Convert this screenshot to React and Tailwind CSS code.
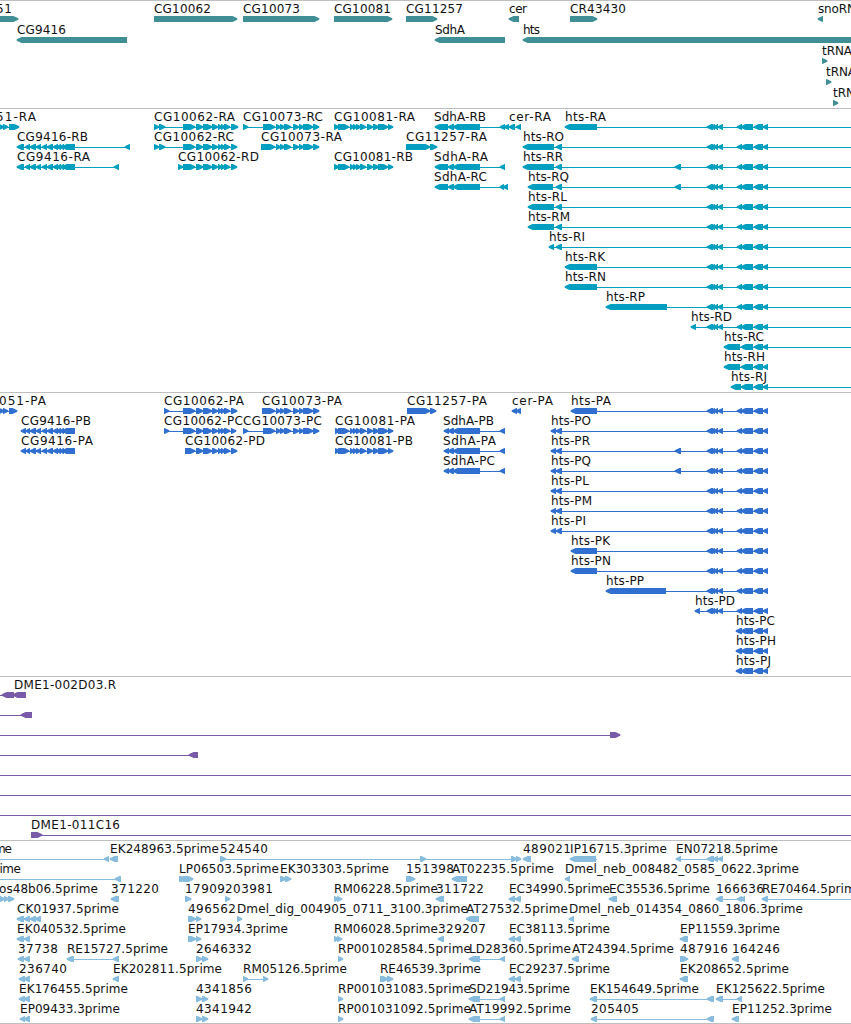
import clsx from "clsx";

// advance widths of the label font, in px
const CHAR_WIDTHS = {
  A: 9, B: 7, C: 8, D: 9, E: 7, G: 9, H: 9, I: 4, J: 4, K: 8, L: 7, M: 10,
  N: 9, O: 9, P: 7, Q: 9, R: 8, S: 6, T: 7, b: 8, c: 6, d: 8, e: 7, g: 8,
  h: 7, i: 3, l: 3, m: 11, n: 7, o: 7, p: 8, r: 5, s: 6, t: 4,
  "-": 7, "_": 6, ".": 4, ":": 4,
};

const labelWidth = (text) =>
  [...text].reduce((sum, ch) => sum + (CHAR_WIDTHS[ch] ?? 8), 0);

// feature = [row, label, label x, strand, blocks, line start, line end]
const genes = [
  [0, "51", -4, 1, [[-20, 18]]],
  [1, "CG9416", 17, -1, [[17, 127]]],
  [0, "CG10062", 154, 1, [[154, 237]]],
  [0, "CG10073", 243, 1, [[243, 319]]],
  [0, "CG10081", 334, 1, [[334, 392]]],
  [0, "CG11257", 406, 1, [[406, 437]]],
  [1, "SdhA", 435, -1, [[435, 505]]],
  [0, "cer", 509, -1, [[509, 519]]],
  [1, "hts", 523, -1, [[523, 870]]],
  [0, "CR43430", 570, 1, [[570, 597]]],
  [0, "snoRNA", 818, -1, [[818, 823]]],
  [2, "tRNA", 822, 1, [[822, 827]]],
  [3, "tRNA", 826, 1, [[826, 831]]],
  [4, "tRNA", 833, 1, [[833, 838]]],
];

const cg9416 = [[30, 36], [36, 41], [42, 47], [47, 53], [53, 58], [57, 61], [60, 64], [62, 75]];
const cg10062 = [[196, 203], [203, 212], [212, 218], [218, 222], [221, 225], [224, 230]];
const cg10073 = [[276, 281], [280, 285], [284, 291], [293, 299], [299, 304], [303, 313], [313, 319]];
const cg10081 = [[338, 349], [350, 354], [353, 357], [356, 361], [360, 366], [367, 373], [373, 379], [378, 388], [388, 393]];
const htsMid = [[707, 713], [711, 715], [714, 718], [718, 723]];
const htsEnd = [[741, 753], [754, 763], [763, 768]];
const htsTail = [...htsMid, [737, 742], ...htsEnd];

const transcripts = [
  [0, "51-RA", -4, 1, [[-2, 4], [3, 8], [9, 19]]],
  [1, "CG9416-RB", 17, -1, [[17, 24], [25, 30], ...cg9416, [125, 130]]],
  [2, "CG9416-RA", 17, -1, [[17, 24], [25, 30], ...cg9416, [114, 119]]],
  [0, "CG10062-RA", 154, 1, [[154, 159], [159, 165], [183, 195], ...cg10062, [231, 238]]],
  [1, "CG10062-RC", 154, 1, [[154, 159], [159, 165], [183, 195], ...cg10062, [231, 237]]],
  [2, "CG10062-RD", 178, 1, [[178, 183], [183, 195], ...cg10062, [231, 237]]],
  [0, "CG10073-RC", 243, 1, [[243, 248], [263, 275], ...cg10073]],
  [1, "CG10073-RA", 261, 1, [[261, 275], ...cg10073]],
  [0, "CG10081-RA", 334, 1, [[334, 339], ...cg10081]],
  [2, "CG10081-RB", 334, 1, [[334, 339], ...cg10081]],
  [1, "CG11257-RA", 406, 1, [[406, 430], [430, 437]]],
  [0, "SdhA-RB", 434, -1, [[435, 448], [448, 454], [453, 480], [500, 505], [504, 509]]],
  [2, "SdhA-RA", 434, -1, [[435, 448], [448, 454], [453, 480], [500, 505]]],
  [3, "SdhA-RC", 434, -1, [[435, 448], [448, 454], [453, 480], [500, 504], [503, 508]]],
  [0, "cer-RA", 509, -1, [[509, 515], [516, 521]]],
  [0, "hts-RA", 565, -1, [[565, 597], ...htsTail], 565, 851],
  [1, "hts-RO", 523, -1, [[523, 554], [556, 562], ...htsTail], 523, 851],
  [2, "hts-RR", 523, -1, [[523, 554], [556, 562], [675, 681], ...htsTail], 523, 851],
  [3, "hts-RQ", 528, -1, [[528, 553], [556, 562], [675, 681], ...htsTail], 528, 851],
  [4, "hts-RL", 528, -1, [[528, 554], [556, 562], ...htsTail], 528, 851],
  [5, "hts-RM", 528, -1, [[528, 554], [556, 562], ...htsTail], 528, 851],
  [6, "hts-RI", 549, -1, [[549, 554], [556, 562], ...htsTail], 549, 851],
  [7, "hts-RK", 565, -1, [[565, 597], ...htsTail], 565, 851],
  [8, "hts-RN", 565, -1, [[565, 597], ...htsTail], 565, 851],
  [9, "hts-RP", 606, -1, [[606, 667], ...htsTail], 606, 851],
  [10, "hts-RD", 691, -1, [[691, 696], ...htsTail], 691, 851],
  [11, "hts-RC", 724, -1, [[724, 740], ...htsEnd], 724, 851],
  [12, "hts-RH", 724, -1, [[724, 740], ...htsEnd]],
  [13, "hts-RJ", 731, -1, [[731, 741], ...htsEnd], 731, 851],
];

const proteins = [
  [0, "051-PA", -1, 1, [[-2, 4], [3, 8], [9, 17]]],
  [1, "CG9416-PB", 21, -1, [[21, 26], [26, 30], ...cg9416]],
  [2, "CG9416-PA", 21, -1, [[21, 26], [26, 30], ...cg9416]],
  [0, "CG10062-PA", 164, 1, [[164, 169], [183, 195], ...cg10062, [231, 237]]],
  [1, "CG10062-PC", 164, 1, [[164, 169], [183, 195], ...cg10062, [231, 236]]],
  [2, "CG10062-PD", 185, 1, [[185, 195], ...cg10062, [231, 237]]],
  [0, "CG10073-PA", 262, 1, [[262, 275], ...cg10073]],
  [1, "CG10073-PC", 243, 1, [[243, 248], [263, 275], ...cg10073]],
  [1, "CG10081-PA", 335, 1, [[335, 340], ...cg10081]],
  [2, "CG10081-PB", 335, 1, [[335, 340], ...cg10081]],
  [0, "CG11257-PA", 407, 1, [[407, 430], [430, 436]]],
  [1, "SdhA-PB", 443, -1, [[444, 449], [448, 454], [453, 480], [500, 505]]],
  [2, "SdhA-PA", 443, -1, [[444, 449], [448, 454], [453, 480], [500, 505]]],
  [3, "SdhA-PC", 443, -1, [[444, 449], [448, 454], [453, 480], [500, 505]]],
  [0, "cer-PA", 512, -1, [[512, 517], [516, 521]]],
  [0, "hts-PA", 571, -1, [[571, 597], ...htsTail]],
  [1, "hts-PO", 551, -1, [[551, 556], [556, 562], ...htsTail]],
  [2, "hts-PR", 551, -1, [[551, 556], [556, 562], [675, 681], ...htsTail]],
  [3, "hts-PQ", 551, -1, [[551, 556], [556, 562], [675, 681], ...htsTail]],
  [4, "hts-PL", 551, -1, [[551, 556], [556, 562], ...htsTail]],
  [5, "hts-PM", 551, -1, [[551, 556], [556, 562], ...htsTail]],
  [6, "hts-PI", 551, -1, [[551, 556], [556, 562], ...htsTail]],
  [7, "hts-PK", 571, -1, [[571, 597], ...htsTail]],
  [8, "hts-PN", 571, -1, [[571, 597], ...htsTail]],
  [9, "hts-PP", 606, -1, [[606, 666], ...htsTail]],
  [10, "hts-PD", 695, -1, [[695, 700], ...htsTail]],
  [11, "hts-PC", 736, -1, [[736, 742], ...htsEnd]],
  [12, "hts-PH", 736, -1, [[736, 742], ...htsEnd]],
  [13, "hts-PJ", 736, -1, [[736, 742], ...htsEnd]],
];

const bacEnds = [
  [0, "DME1-002D03.R", 14, -1, [[2, 14], [13, 26]], 0, 26],
  [1, "", 0, -1, [[21, 32]], 0, 32],
  [2, "", 0, 1, [[610, 620]], 0, 620],
  [3, "", 0, -1, [[189, 198]], 0, 198],
  [4, "", 0, 1, [], 0, 851],
  [5, "", 0, 1, [], 0, 851],
  [6, "", 0, 1, [], 0, 851],
  [7, "DME1-011C16", 31, 1, [[31, 42]], 31, 851],
];

const ests = [
  [0, "me", -6, -1, [[104, 109]], 0, 109],
  [0, "EK248963.5prime", 110, -1, [[110, 118]]],
  [0, "524540", 220, 1, [[220, 226], [420, 426], [511, 517], [516, 521]]],
  [0, "489021", 523, -1, [[523, 531]]],
  [0, "IP16715.3prime", 570, -1, [[570, 596]], 570, 597],
  [0, "EN07218.5prime", 676, -1, [[676, 681], [707, 714], [713, 718], [718, 723]]],
  [1, "rime", -5, -1, [[115, 121]], 0, 121],
  [1, "LP06503.5prime", 179, 1, [[179, 186], [183, 193]]],
  [1, "EK303303.5prime", 280, 1, [[280, 286], [285, 291]]],
  [1, "151398", 406, 1, [[406, 415]]],
  [1, "AT02235.5prime", 452, -1, [[452, 467]]],
  [1, "Dmel_neb_008482_0585_0622.3prime", 565, -1, [[565, 570]]],
  [2, "os48b06.5prime", -1, 1, [[-1, 5], [4, 9], [8, 14]]],
  [2, "371220", 111, -1, [[111, 119]]],
  [2, "17909", 185, 1, [[185, 191]]],
  [2, "203981", 225, 1, [[225, 230]]],
  [2, "RM06228.5prime", 334, 1, [[334, 339], [337, 342]]],
  [2, "311722", 436, -1, [[436, 444]]],
  [2, "EC34990.5prime", 509, -1, [[509, 515], [515, 521]]],
  [2, "EC35536.5prime", 609, -1, [[609, 617]]],
  [2, "166636", 716, -1, [[716, 723], [737, 742], [740, 745]]],
  [2, "RE70464.5prime", 762, -1, [[762, 768]], 762, 851],
  [3, "CK01937.5prime", 17, -1, [[17, 24], [24, 30], [30, 36], [35, 41]]],
  [3, "496562", 188, 1, [[188, 196], [196, 201]]],
  [3, "Dmel_dig_004905_0711_3100.3prime", 237, 1, [[237, 242]]],
  [3, "AT27532.5prime", 466, -1, [[466, 479]]],
  [3, "Dmel_neb_014354_0860_1806.3prime", 569, -1, [[569, 574]]],
  [4, "EK040532.5prime", 17, -1, [[17, 24], [24, 30]]],
  [4, "EP17934.3prime", 188, 1, [[188, 196], [196, 201]]],
  [4, "RM06028.5prime", 334, 1, [[334, 339], [337, 342]]],
  [4, "329207", 438, -1, [[438, 444]]],
  [4, "EC38113.5prime", 509, -1, [[509, 515], [515, 521]]],
  [4, "EP11559.3prime", 680, -1, [[680, 688]]],
  [5, "37738", 18, -1, [[18, 24], [24, 30]]],
  [5, "RE15727.5prime", 67, -1, [[67, 74], [113, 119]]],
  [5, "2646332", 196, 1, [[196, 202], [202, 208]]],
  [5, "RP001028584.5prime", 338, 1, [[338, 343]]],
  [5, "LD28360.5prime", 469, -1, [[469, 480], [500, 505]]],
  [5, "AT24394.5prime", 572, -1, [[572, 579]]],
  [5, "487916", 680, 1, [[680, 688]]],
  [5, "164246", 732, -1, [[732, 739]]],
  [6, "236740", 19, -1, [[19, 25], [24, 30]]],
  [6, "EK202811.5prime", 113, -1, [[113, 119]]],
  [6, "RM05126.5prime", 243, 1, [[243, 248], [263, 268]]],
  [6, "RE46539.3prime", 380, 1, [[380, 388], [387, 393]]],
  [6, "EC29237.5prime", 509, -1, [[509, 515], [515, 521]]],
  [6, "EK208652.5prime", 680, -1, [[680, 688]]],
  [7, "EK176455.5prime", 19, -1, [[19, 25], [24, 30]]],
  [7, "4341856", 196, 1, [[196, 202], [202, 208]]],
  [7, "RP001031083.5prime", 338, 1, [[338, 343]]],
  [7, "SD21943.5prime", 469, -1, [[469, 480], [500, 505]]],
  [7, "EK154649.5prime", 590, -1, [[590, 597], [707, 714]]],
  [7, "EK125622.5prime", 716, -1, [[716, 723], [737, 742]]],
  [8, "EP09433.3prime", 20, -1, [[20, 25], [24, 30]]],
  [8, "4341942", 196, 1, [[196, 202], [202, 208]]],
  [8, "RP001031092.5prime", 338, 1, [[338, 343]]],
  [8, "AT19992.5prime", 469, -1, [[469, 480], [500, 505]]],
  [8, "205405", 591, -1, [[591, 597], [707, 714]]],
  [8, "EP11252.3prime", 732, -1, [[732, 739]]],
];

const tracks = [
  { id: "genes", features: genes, pitch: 21, className: "h-[108px] text-[#408f96]" },
  { id: "transcripts", features: transcripts, pitch: 20, className: "h-[284px] text-[#009fbf]" },
  { id: "proteins", features: proteins, pitch: 20, className: "h-[284px] text-[#306fcf]" },
  { id: "bacs", features: bacEnds, pitch: 20, className: "h-[164px] text-[#785aa8]" },
  { id: "ests", features: ests, pitch: 20, className: "h-[184px] border-b text-[#87bcde]" },
];

// Block with an arrow head pointing along the strand
const blockPath = (x1, x2, strand) => {
  const head = Math.min(5, x2 - x1);
  return strand > 0
    ? `M${x1} 0H${x2 - head + 0.5}L${x2 + 0.3} 2.2V3.8L${x2 - head + 0.5} 6H${x1}Z`
    : `M${x2} 0H${x1 + head - 0.5}L${x1 - 0.3} 2.2V3.8L${x1 + head - 0.5} 6H${x2}Z`;
};

const Feature = ({ feature, pitch }) => {
  const [row, label, labelX, strand, blocks, start, end] = feature;
  const from = start ?? blocks[0][0];
  const to = end ?? blocks[blocks.length - 1][1];
  const showLine = start !== undefined || blocks.length > 1;

  return (
    <g transform={`translate(0 ${row * pitch})`}>
      <g transform="translate(0 15)" fill="currentColor">
        {showLine && <rect x={from} y="3" width={to - from} height="1" />}
        {blocks.map(([x1, x2]) => (
          <path key={x1} d={blockPath(x1, x2, strand)} />
        ))}
      </g>
      {label && (
        <text x={labelX} y="12" textLength={labelWidth(label)} className="fill-[#111]">
          {label}
        </text>
      )}
    </g>
  );
};

const Track = ({ features, pitch, className }) => (
  <div className={clsx("w-full shrink-0 overflow-hidden border-t border-[#bfbfbf]", className)}>
    <svg className="block h-full w-[851px] font-['DejaVu_Sans',sans-serif] text-[12px]">
      {features.map((feature, i) => (
        <Feature key={i} feature={feature} pitch={pitch} />
      ))}
    </svg>
  </div>
);

const App = () => {
  return (
    <div className="flex h-screen w-full flex-col overflow-hidden bg-white">
      {tracks.map((track) => (
        <Track key={track.id} {...track} />
      ))}
    </div>
  );
};

export default App;
